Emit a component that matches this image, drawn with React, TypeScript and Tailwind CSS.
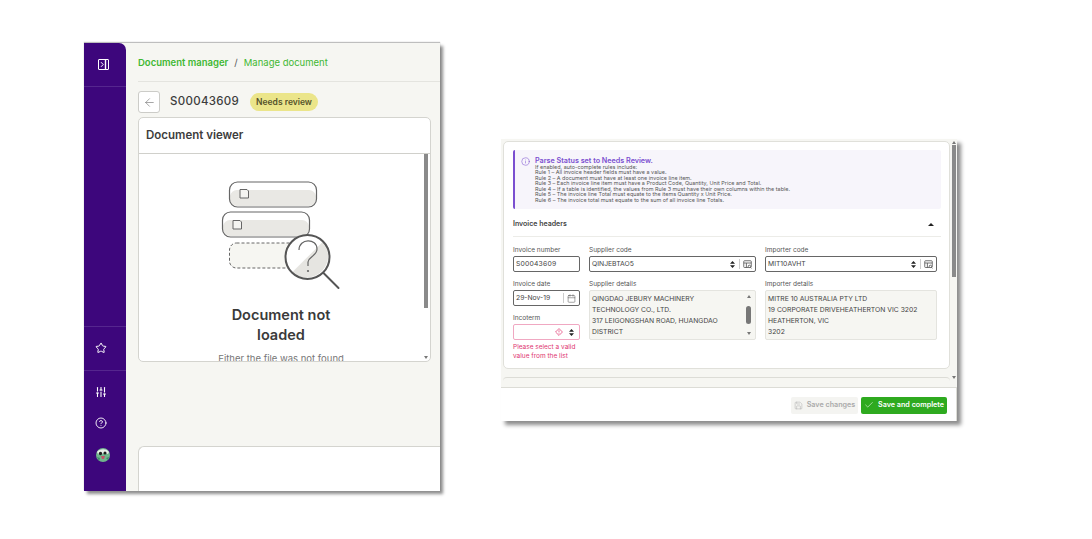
import React from "react";
import { ArrowLeft, Check, Star, SlidersVertical, CircleHelp, Info, Calendar, Save } from "lucide-react";

const Picker = () => (
  <svg width="9" height="9" viewBox="0 0 12 12" fill="none" stroke="#555" strokeWidth="1.1">
    <rect x="1" y="1" width="10" height="9" rx="1" />
    <path d="M1 4h10M4.500 4v6" />
    <circle cx="8.500" cy="8.500" r="1.600" fill="#fff" />
    <path d="M9.700 9.700l1.500 1.500" />
  </svg>
);

const UpDown = () => (
  <svg width="5" height="7" viewBox="0 0 5 7" fill="#222" className="shrink-0">
    <path d="M2.500 0L5 2.800H0zM2.500 7L0 4.200h5z" />
  </svg>
);

const Label = ({ children }: { children: React.ReactNode }) => (
  <div className="h-[7px] flex items-center text-[6.5px] leading-[7px] text-[#555]">{children}</div>
);

const CodeSelect = ({ value }: { value: string }) => (
  <div className="mt-[2px] h-[16px] flex items-center border border-[#666] rounded-[2px] bg-white pl-[2px]">
    <span className="flex-1 text-[6.8px] text-[#444]">{value}</span>
    <UpDown />
    <span className="ml-[4px] h-[10px] border-l border-[#ccc]" />
    <span className="mx-[3px] flex"><Picker /></span>
  </div>
);

const Details = ({ lines, bar }: { lines: string[]; bar?: boolean }) => (
  <div className="relative mt-[2px] h-[50px] bg-[#f6f6f2] border border-[#e4e4df] rounded-[2px] pl-[2px] pt-[2px] text-[6.8px] leading-[11px] text-[#444]">
    {lines.map((l) => (
      <div key={l} className="whitespace-nowrap">{l}</div>
    ))}
    {bar && (
      <div className="absolute right-[4px] top-[4px] bottom-[4px] w-[5px] flex flex-col items-center justify-between">
        <span className="w-0 h-0 border-x-[2px] border-x-transparent border-b-[3px] border-b-[#777]" />
        <span className="w-[5px] h-[18px] rounded-full bg-[#777]" />
        <span className="w-0 h-0 border-x-[2px] border-x-transparent border-t-[3px] border-t-[#777]" />
      </div>
    )}
  </div>
);

const Illustration = () => (
  <svg width="126" height="112" viewBox="-6 0 126 112" fill="none" className="block">
    <rect x="2.500" y="1" width="87" height="25" rx="8" fill="#fff" />
    <path d="M3 15a7 7 0 0 1 7-6h72a7 7 0 0 1 7 6v3a7 7 0 0 1-7 7H10a7 7 0 0 1-7-7z" fill="#e9e8e4" />
    <rect x="2.500" y="1" width="87" height="25" rx="8" stroke="#666" strokeWidth="1.200" />
    <path d="M13 8.500h7l1.500 1.500v7H13z" fill="#f4f4f1" stroke="#666" strokeWidth="1" />
    <rect x="-4.500" y="31" width="87" height="25" rx="8" fill="#fff" />
    <path d="M-4 45a7 7 0 0 1 7-6h72a7 7 0 0 1 7 6v3a7 7 0 0 1-7 7H3a7 7 0 0 1-7-7z" fill="#e9e8e4" />
    <rect x="-4.500" y="31" width="87" height="25" rx="8" stroke="#666" strokeWidth="1.200" />
    <path d="M6 39.500h7l1.500 1.500v7H6z" fill="#f4f4f1" stroke="#666" strokeWidth="1" />
    <rect x="2.500" y="62" width="87" height="25" rx="7" fill="#f6f6f2" stroke="#666" strokeWidth="1" strokeDasharray="3 2" />
    <circle cx="80.500" cy="76" r="22" fill="#fff" />
    <path d="M96 60.500a22 22 0 0 1-31 31z" fill="#e6e5e1" />
    <circle cx="80.500" cy="76" r="22" stroke="#555" strokeWidth="2" />
    <path d="M96.500 92l15 15" stroke="#555" strokeWidth="2" strokeLinecap="round" />
    <path d="M72 69c0-12 18-12 18-1 0 7-8 7-9 13v4" stroke="#666" strokeWidth="1.200" />
    <circle cx="81" cy="90" r="1.100" fill="#666" />
  </svg>
);

const PanelIcon = () => (
  <svg width="11" height="11" viewBox="0 0 11 11" fill="none" stroke="#fff" strokeWidth="1">
    <rect x="0.500" y="0.500" width="10" height="10" rx="0.500" />
    <path d="M7.500 0.500v10" strokeWidth="1.400" />
    <path d="M3 3.200l2.200 2.300L3 7.800" />
  </svg>
);

const Avatar = () => (
  <svg width="14" height="14" viewBox="0 0 14 14">
    <circle cx="7" cy="7" r="7" fill="#6fb58c" />
    <path d="M1 4c2-3 9-4 12 0l-1 2-4-1-3 2-3-1z" fill="#e8eee8" />
    <circle cx="4.500" cy="5.500" r="1.700" fill="#1d1d1d" />
    <circle cx="9" cy="5" r="1.500" fill="#1d1d1d" />
    <path d="M5 8h4l-1 3H6z" fill="#c8506a" />
    <path d="M10 10l3-1-1 3zM1 9l3 1-1 3z" fill="#3e8a68" />
  </svg>
);

const rules = [
  "If enabled, auto-complete rules include:",
  "Rule 1 – All invoice header fields must have a value.",
  "Rule 2 – A document must have at least one invoice line item.",
  "Rule 3 – Each invoice line item must have a Product Code, Quantity, Unit Price and Total.",
  "Rule 4 – If a table is identified, the values from Rule 3 must have their own columns within the table.",
  "Rule 5 – The invoice line Total must equate to the items Quantity x Unit Price.",
  "Rule 6 – The invoice total must equate to the sum of all invoice line Totals.",
];

export default function App() {
  return (
    <div className="w-[1092px] h-[539px] bg-white overflow-hidden flex items-start font-['Inter',sans-serif]">
      {/* left window */}
      <div className="ml-[84px] mt-[43px] w-[356px] h-[448px] flex shrink-0 bg-[#f6f6f2] shadow-[3px_3px_3px_rgba(0,0,0,0.45),0_-1px_1px_rgba(0,0,0,0.25)]">
        <aside className="w-[42px] shrink-0 bg-[#3d067c] rounded-tr-[7px] flex flex-col text-white">
          <div className="h-[44px] border-b border-[#55268e] flex items-center justify-center pb-[1px] pr-[4px]">
            <PanelIcon />
          </div>
          <div className="flex-1" />
          <div className="h-[45px] border-y border-[#55268e] flex items-center justify-center pr-[8px] pb-[1px]">
            <Star size={12} strokeWidth={2} />
          </div>
          <div className="h-[120px] flex flex-col items-center pt-[15px] pr-[8px]">
            <SlidersVertical size={12} strokeWidth={2.200} />
            <CircleHelp size={12} strokeWidth={1.800} className="mt-[19px]" />
            <div className="mt-[19px] ml-[4px]"><Avatar /></div>
          </div>
        </aside>
        <main className="flex-1 min-w-0 flex flex-col pl-[12px]">
          <div className="h-[39px] shrink-0 border-b border-[#e4e4df] flex items-center text-[9.5px] pt-[2px]">
            <span className="font-semibold text-[#3fb832]">Document manager</span>
            <span className="mx-[6px] text-[#555]">/</span>
            <span className="text-[#3fb832]">Manage document</span>
          </div>
          <div className="mt-[9px] h-[22px] flex items-center shrink-0">
            <div className="w-[22px] h-[22px] border border-[#ccccc8] rounded-[3px] bg-white flex items-center justify-center text-[#777]">
              <ArrowLeft size={13} strokeWidth={1.200} />
            </div>
            <span className="ml-[10px] text-[11.5px] font-medium tracking-[0.3px] text-[#3d3d3d]">S00043609</span>
            <span className="ml-[11px] h-[18px] px-[6px] rounded-full bg-[#ebe58a] flex items-center text-[8.5px] font-semibold text-[#55532a]">Needs review</span>
          </div>
          <div className="relative mt-[4px] w-[293px] h-[245px] shrink-0 bg-white border border-[#d4d4cf] rounded-[5px] overflow-hidden flex flex-col">
            <div className="h-[36px] shrink-0 border-b border-[#d0d0cb] flex items-center pl-[7px] pt-[1px] text-[11.5px] font-semibold text-[#3d3d3d]">
              Document viewer
            </div>
            <div className="flex-1 overflow-hidden flex flex-col items-center pr-[2px]">
              <div className="mt-[27px]"><Illustration /></div>
              <div className="mt-[12px] mr-[5px] w-[140px] text-center text-[14.5px] leading-[20px] font-semibold text-[#3a3a3a]">Document not loaded</div>
              <div className="mt-[7px] mr-[5px] text-[9.5px] leading-[14px] text-[#777] whitespace-nowrap">Either the file was not found</div>
            </div>
            <div className="absolute right-[1px] top-[36px] bottom-0 w-[6px] flex flex-col items-center justify-between">
              <span className="w-[4px] h-[154px] bg-[#8a8a8a]" />
              <span className="mb-[2px] w-0 h-0 border-x-[2px] border-x-transparent border-t-[3px] border-t-[#777]" />
            </div>
          </div>
          <div className="flex-1" />
          <div className="h-[45px] shrink-0 bg-white border-l border-t border-[#d4d4cf] rounded-tl-[6px]" />
        </main>
      </div>

      {/* right window */}
      <div className="ml-[61px] mt-[139px] w-[456px] h-[282px] shrink-0 flex flex-col bg-white shadow-[4px_4px_4px_rgba(0,0,0,0.45)]">
        <div className="relative h-[249px] shrink-0 bg-[#f6f6f2] border-b border-[#dcdcd6] pl-[2px] pt-[2px]">
          <div className="w-[447px] h-[228px] bg-white border border-[#e0e0da] rounded-[5px] pl-[9px] pr-[8px] pt-[8px]">
            <div className="h-[59px] bg-[#f7f5fb] border-l-2 border-[#7b4fd0] rounded-[2px] pl-[6px] pt-[6px] flex items-start">
              <Info size={9} strokeWidth={1.400} className="text-[#7b4fd0] mt-[1px] shrink-0" />
              <div className="ml-[5px]">
                <div className="text-[7.2px] leading-[10px] font-semibold text-[#7b4fd0] whitespace-nowrap">Parse Status set to Needs Review.</div>
                <div className="mt-[-1px] text-[5.45px] leading-[5.45px] text-[#555] whitespace-nowrap">
                  {rules.map((r) => (
                    <div key={r}>{r}</div>
                  ))}
                </div>
              </div>
            </div>
            <div className="h-[28px] border-b border-[#ecece8] flex items-center justify-between pr-[7px] pt-[4px]">
              <span className="text-[7px] font-semibold text-[#444]">Invoice headers</span>
              <span className="w-0 h-0 border-x-[3px] border-x-transparent border-b-[3px] border-b-[#222]" />
            </div>
            <div className="mt-[10px] grid grid-cols-[67px_167px_172px] gap-x-[9px]">
              <div>
                <Label>Invoice number</Label>
                <div className="mt-[2px] h-[16px] border border-[#666] rounded-[2px] flex items-center pl-[2px] text-[6.8px] tracking-[0.2px] text-[#444]">S00043609</div>
                <div className="mt-[9px]"><Label>Invoice date</Label></div>
                <div className="mt-[2px] h-[16px] border border-[#666] rounded-[2px] flex items-center pl-[2px] text-[6.8px] text-[#444]">
                  <span className="flex-1">29-Nov-19</span>
                  <span className="h-[10px] border-l border-[#ccc]" />
                  <Calendar size={9} strokeWidth={1.300} className="mx-[3px] text-[#444]" />
                </div>
                <div className="mt-[9px]"><Label>Incoterm</Label></div>
                <div className="mt-[2px] h-[16px] border border-[#f0a8c2] rounded-[2px] flex items-center justify-end pr-[5px]">
                  <svg width="8" height="8" viewBox="0 0 10 10" fill="none" stroke="#e0356f" strokeWidth="0.900">
                    <path d="M5 .7L9.300 5 5 9.300.7 5z" />
                    <path d="M5 2.800v2.700M5 6.500v.8" />
                  </svg>
                  <span className="ml-[6px] flex"><UpDown /></span>
                </div>
                <div className="mt-[3px] text-[6.5px] leading-[8.500px] text-[#e0356f]">Please select a valid value from the list</div>
              </div>
              <div>
                <Label>Supplier code</Label>
                <CodeSelect value="QINJEBTAO5" />
                <div className="mt-[9px]"><Label>Supplier details</Label></div>
                <Details bar lines={["QINGDAO JEBURY MACHINERY", "TECHNOLOGY CO., LTD.", "317 LEIGONGSHAN ROAD, HUANGDAO", "DISTRICT"]} />
              </div>
              <div>
                <Label>Importer code</Label>
                <CodeSelect value="MIT10AVHT" />
                <div className="mt-[9px]"><Label>Importer details</Label></div>
                <Details lines={["MITRE 10 AUSTRALIA PTY LTD", "19 CORPORATE DRIVEHEATHERTON VIC 3202", "HEATHERTON, VIC", "3202"]} />
              </div>
            </div>
          </div>
          <div className="mt-[8px] w-[447px] h-[4px] border-t border-[#dcdcd6] rounded-t-[5px]" />
          <div className="absolute right-[1px] top-[2px] bottom-[8px] w-[5px] flex flex-col items-center">
            <span className="w-0 h-0 border-x-[2px] border-x-transparent border-b-[3px] border-b-[#777]" />
            <span className="mt-[1px] w-[4px] h-[132px] bg-[#8a8a8a]" />
            <span className="mt-auto w-0 h-0 border-x-[2px] border-x-transparent border-t-[3px] border-t-[#777]" />
          </div>
        </div>
        <div className="flex-1 flex items-center justify-end pr-[9px] border-r border-[#dcdcd6] pt-[1px]">
          <div className="w-[67px] h-[17px] bg-[#f4f4f1] rounded-[2px] flex items-center justify-center text-[7.200px] font-semibold text-[#aaa] whitespace-nowrap">
            <Save size={9} strokeWidth={1.300} className="mr-[4px] text-[#aaa]" />
            Save changes
          </div>
          <div className="ml-[3px] w-[86px] h-[17px] bg-[#2eaa1f] rounded-[2px] flex items-center justify-center text-[7.200px] font-semibold text-white whitespace-nowrap">
            <Check size={10} strokeWidth={1.300} className="mr-[4px]" />
            Save and complete
          </div>
        </div>
      </div>
    </div>
  );
}
